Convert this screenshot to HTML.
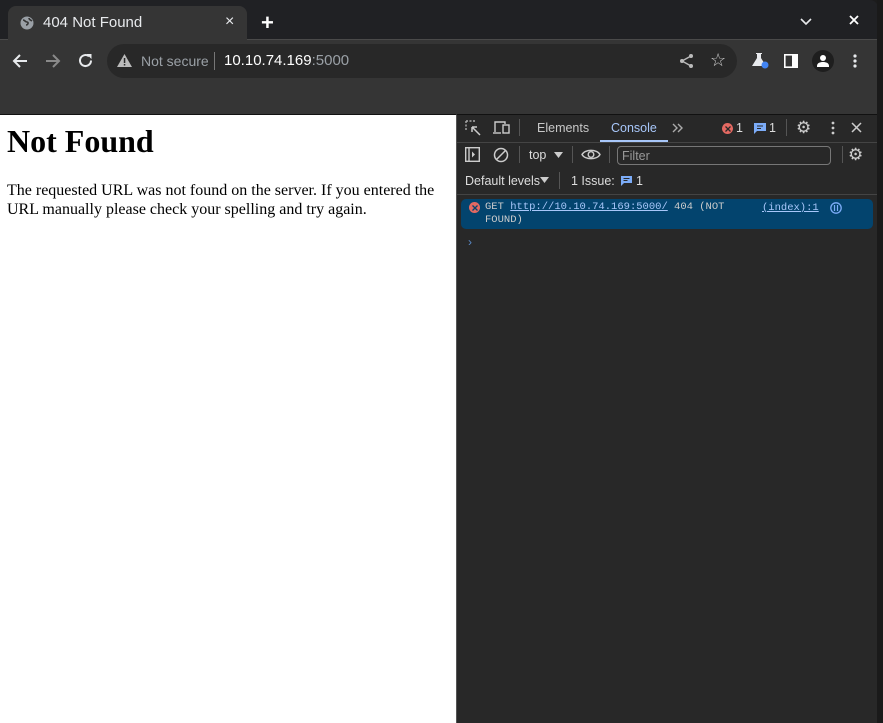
<!DOCTYPE html>
<html><head><meta charset="utf-8"><style>
*{margin:0;padding:0;box-sizing:border-box}
body{width:883px;height:723px;overflow:hidden;background:#1c1c1c;font-family:"Liberation Sans",sans-serif;position:relative}
.a{position:absolute}
.ui{font-family:"Liberation Sans",sans-serif}
</style></head><body>
<div class="a" style="left:0;top:0;width:878px;height:40px;background:#202124;border-top-right-radius:8px"></div>
<div class="a" style="left:877px;top:0;width:6px;height:723px;background:#1a1a1a"></div>
<div class="a" style="left:0;top:39px;width:877px;height:75px;background:#353535;border-top:1px solid #4a4a4a"></div>
<div class="a" style="left:8px;top:6px;width:239px;height:35px;background:#353535;border-radius:8px 8px 0 0"></div>
<svg class="a" style="left:20px;top:16px" width="14" height="14" viewBox="0 0 14 14"><circle cx="7" cy="7" r="6.5" fill="#9aa0a6"/><path d="M3 4c2 0 2 2 4 2s1 3 -1 3M9 2c0 2 2 2 3 3" stroke="#353535" stroke-width="1.6" fill="none"/></svg>
<div class="a ui" style="left:43px;top:14px;font-size:15px;color:#e8eaed">404 Not Found</div>
<div class="a ui" style="left:225px;top:13px;font-size:16px;color:#e8eaed">×</div>
<div class="a" style="left:261px;top:14px;font-size:22px;line-height:18px;color:#fff;font-weight:bold">+</div>
<svg class="a" style="left:800px;top:18px" width="12" height="8"><path d="M1 1l5 5 5-5" stroke="#e8eaed" stroke-width="1.6" fill="none"/></svg>
<svg class="a" style="left:849px;top:15px" width="10" height="10"><path d="M1 1l8 8M9 1l-8 8" stroke="#fff" stroke-width="1.8"/></svg>
<svg class="a" style="left:12px;top:53px" width="16" height="16"><path d="M15 8H2M8 2L2 8l6 6" stroke="#e8eaed" stroke-width="2" fill="none"/></svg>
<svg class="a" style="left:45px;top:53px" width="16" height="16"><path d="M1 8h13M8 2l6 6-6 6" stroke="#8a8a8a" stroke-width="2" fill="none"/></svg>
<svg class="a" style="left:77px;top:52px" width="17" height="17"><path d="M14 8.5A5.5 5.5 0 1 1 12 4.3" stroke="#e8eaed" stroke-width="2" fill="none"/><path d="M9.5 2h5v5z" fill="#e8eaed"/></svg>
<div class="a" style="left:107px;top:44px;width:630px;height:34px;background:#282828;border-radius:17px"></div>
<svg class="a" style="left:117px;top:54px" width="15" height="13"><path d="M7.5 0L15 13H0z" fill="#bbb"/><rect x="6.8" y="4" width="1.5" height="5" fill="#282828"/><rect x="6.8" y="10" width="1.5" height="1.5" fill="#282828"/></svg>
<div class="a ui" style="left:141px;top:53px;font-size:14px;color:#9aa0a6">Not secure</div>
<div class="a" style="left:214px;top:52px;width:1px;height:18px;background:#777"></div>
<div class="a ui" style="left:224px;top:52px;font-size:15px;color:#fff">10.10.74.169<span style="color:#9aa0a6">:5000</span></div>
<svg class="a" style="left:679px;top:53px" width="15" height="16"><circle cx="12" cy="3" r="2" fill="#bbb"/><circle cx="3" cy="8" r="2" fill="#bbb"/><circle cx="12" cy="13" r="2" fill="#bbb"/><path d="M12 3L3 8l9 5" stroke="#bbb" stroke-width="1.4" fill="none"/></svg>
<div class="a" style="left:710px;top:50px;font-size:18px;color:#ccc">☆</div>
<svg class="a" style="left:751px;top:52px" width="18" height="18"><path d="M5 1h6v1H10v4l5 8H1l5-8V2H5z" fill="#e8eaed"/><circle cx="14" cy="13" r="3.5" fill="#4285f4"/></svg>
<svg class="a" style="left:784px;top:54px" width="14" height="14"><rect x="0.8" y="0.8" width="12.4" height="12.4" fill="none" stroke="#fff" stroke-width="1.6"/><rect x="8" y="1" width="5" height="12" fill="#fff"/></svg>
<div class="a" style="left:812px;top:50px;width:22px;height:22px;border-radius:11px;background:#1e1e1e"></div>
<svg class="a" style="left:815px;top:53px" width="16" height="16"><circle cx="8" cy="5" r="3" fill="#fff"/><path d="M2 13c0-3 3-4 6-4s6 1 6 4v1H2z" fill="#fff"/></svg>
<svg class="a" style="left:853px;top:54px" width="4" height="14"><circle cx="2" cy="2" r="1.6" fill="#e8eaed"/><circle cx="2" cy="7" r="1.6" fill="#e8eaed"/><circle cx="2" cy="12" r="1.6" fill="#e8eaed"/></svg>
<div class="a" style="left:0;top:114px;width:456px;height:609px;background:#fff;border-top:1px solid #111"></div>
<div class="a" style="left:7px;top:123px;font-family:'Liberation Serif',serif;font-size:32px;font-weight:bold;color:#000">Not Found</div>
<div class="a" style="left:7px;top:181px;width:445px;font-family:'Liberation Serif',serif;font-size:16px;line-height:19px;color:#000">The requested URL was not found on the server. If you entered the URL manually please check your spelling and try again.</div>
<div class="a" style="left:456px;top:114px;width:421px;height:609px;background:#282828;border-left:1px solid #555;border-top:1px solid #111"></div>
<div class="a" style="left:457px;top:142px;width:420px;height:1px;background:#444"></div>
<div class="a" style="left:457px;top:194px;width:420px;height:1px;background:#444"></div>
<svg class="a" style="left:465px;top:120px" width="16" height="16"><path d="M1 1h10M1 1v10" stroke="#aaa" stroke-width="1.4" stroke-dasharray="2 1.5" fill="none"/><path d="M7 7l8 8M7 7h5M7 7v5" stroke="#ccc" stroke-width="1.5" fill="none"/></svg>
<svg class="a" style="left:492px;top:120px" width="18" height="15"><path d="M3 12V2h10v2" stroke="#ccc" stroke-width="1.4" fill="none"/><path d="M1 13h8" stroke="#ccc" stroke-width="1.4"/><rect x="11" y="5" width="6" height="8" fill="none" stroke="#ccc" stroke-width="1.4"/></svg>
<div class="a" style="left:519px;top:119px;width:1px;height:17px;background:#555"></div>
<div class="a ui" style="left:537px;top:121px;font-size:12.5px;color:#c8c8c8">Elements</div>
<div class="a ui" style="left:611px;top:121px;font-size:12.5px;color:#a8c7fa">Console</div>
<div class="a" style="left:600px;top:140px;width:68px;height:2px;background:#a8c7fa"></div>
<svg class="a" style="left:672px;top:123px" width="12" height="10"><path d="M1 1l4 4-4 4M6 1l4 4-4 4" stroke="#aaa" stroke-width="1.4" fill="none"/></svg>
<div class="a" style="left:722px;top:123px;width:11px;height:11px;border-radius:6px;background:#e46962"></div>
<svg class="a" style="left:724.5px;top:125.5px" width="6" height="6"><path d="M0.5 0.5l5 5M5.5 0.5l-5 5" stroke="#282828" stroke-width="1.3"/></svg>
<div class="a ui" style="left:736px;top:121px;font-size:12.5px;color:#ddd">1</div>
<svg class="a" style="left:754px;top:123px" width="12" height="11"><path d="M0 0h12v8H3l-3 3z" fill="#7cacf8"/><path d="M3 3h6M3 5.5h4" stroke="#282828"/></svg>
<div class="a ui" style="left:769px;top:121px;font-size:12.5px;color:#ddd">1</div>
<div class="a" style="left:786px;top:119px;width:1px;height:17px;background:#555"></div>
<div class="a" style="left:796px;top:118px;font-size:17px;color:#ccc">⚙</div>
<svg class="a" style="left:831px;top:121px" width="4" height="14"><circle cx="2" cy="2" r="1.4" fill="#ccc"/><circle cx="2" cy="7" r="1.4" fill="#ccc"/><circle cx="2" cy="12" r="1.4" fill="#ccc"/></svg>
<svg class="a" style="left:851px;top:122px" width="11" height="11"><path d="M1 1l9 9M10 1l-9 9" stroke="#ccc" stroke-width="1.5"/></svg>
<svg class="a" style="left:465px;top:147px" width="15" height="15"><rect x="0.7" y="0.7" width="13.6" height="13.6" fill="none" stroke="#ccc" stroke-width="1.4"/><path d="M4 1v13" stroke="#ccc" stroke-width="1.4"/><path d="M7 4.5l3 3-3 3z" fill="#ccc"/></svg>
<svg class="a" style="left:493px;top:147px" width="16" height="16"><circle cx="8" cy="8" r="6.5" fill="none" stroke="#ccc" stroke-width="1.5"/><path d="M3.5 12.5l9-9" stroke="#ccc" stroke-width="1.5"/></svg>
<div class="a" style="left:519px;top:146px;width:1px;height:17px;background:#555"></div>
<div class="a ui" style="left:529px;top:148px;font-size:12.5px;color:#ddd">top</div>
<svg class="a" style="left:554px;top:152px" width="9" height="6"><path d="M0 0h9L4.5 6z" fill="#ccc"/></svg>
<div class="a" style="left:572px;top:146px;width:1px;height:17px;background:#555"></div>
<svg class="a" style="left:581px;top:148px" width="20" height="13"><path d="M1 6.5C4 1 16 1 19 6.5C16 12 4 12 1 6.5z" fill="none" stroke="#ccc" stroke-width="1.4"/><circle cx="10" cy="6.5" r="2.8" fill="none" stroke="#ccc" stroke-width="1.4"/></svg>
<div class="a" style="left:609px;top:146px;width:1px;height:17px;background:#555"></div>
<div class="a" style="left:617px;top:146px;width:214px;height:19px;border:1px solid #777;border-radius:4px;background:#282828"></div>
<div class="a ui" style="left:622px;top:149px;font-size:12.5px;color:#999">Filter</div>
<div class="a" style="left:842px;top:146px;width:1px;height:17px;background:#555"></div>
<div class="a" style="left:848px;top:145px;font-size:17px;color:#ccc">⚙</div>
<div class="a ui" style="left:465px;top:174px;font-size:12.5px;color:#ddd">Default levels</div>
<svg class="a" style="left:540px;top:177px" width="9" height="6"><path d="M0 0h9L4.5 6z" fill="#ccc"/></svg>
<div class="a" style="left:559px;top:172px;width:1px;height:17px;background:#555"></div>
<div class="a ui" style="left:571px;top:174px;font-size:12.5px;color:#ddd">1 Issue:</div>
<svg class="a" style="left:621px;top:176px" width="11" height="10"><path d="M0 0h11v7H3l-3 3z" fill="#7cacf8"/><path d="M2.5 2.5h6M2.5 4.5h4" stroke="#282828"/></svg>
<div class="a ui" style="left:636px;top:174px;font-size:12.5px;color:#ddd">1</div>
<div class="a" style="left:461px;top:199px;width:412px;height:30px;background:#03446e;border-radius:5px"></div>
<div class="a" style="left:469px;top:202px;width:11px;height:11px;border-radius:6px;background:#e46962"></div>
<svg class="a" style="left:471.5px;top:204.5px" width="6" height="6"><path d="M0.5 0.5l5 5M5.5 0.5l-5 5" stroke="#03446e" stroke-width="1.3"/></svg>
<div class="a" style="left:485px;top:201px;font-family:'Liberation Mono',monospace;font-size:10.5px;line-height:12.5px;color:#ccc;white-space:pre">GET <span style="text-decoration:underline;color:#a8c7fa">http://10.10.74.169:5000/</span> 404 (NOT
FOUND)</div>
<div class="a" style="left:762px;top:202px;font-family:'Liberation Mono',monospace;font-size:10.5px;color:#a8c7fa;text-decoration:underline">(index):1</div>
<svg class="a" style="left:830px;top:202px" width="12" height="12"><circle cx="6" cy="6" r="5.2" fill="none" stroke="#7cacf8" stroke-width="1.3"/><path d="M4.5 3v6M7.5 3v6" stroke="#7cacf8" stroke-width="1.2"/></svg>
<div class="a ui" style="left:468px;top:235px;font-size:12px;color:#5a8ac8">›</div>
</body></html>
